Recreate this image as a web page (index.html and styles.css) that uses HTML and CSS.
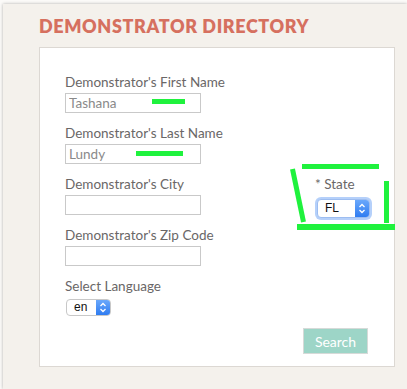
FILE: index.html
```html
<!DOCTYPE html>
<html lang="en">
<head>
  <meta charset="UTF-8">
  <title>Demonstrator Directory</title>
  <link rel="stylesheet" href="styles.css">
</head>
<body>
  <div class="panel">
    <h1>DEMONSTRATOR DIRECTORY</h1>
    <form class="search-box" onsubmit="return false">
      <div class="cols">
        <div class="col-left">
          <div class="field">
            <label>Demonstrator's First Name</label>
            <input type="text" value="Tashana">
          </div>
          <div class="field">
            <label>Demonstrator's Last Name</label>
            <input type="text" value="Lundy">
          </div>
          <div class="field">
            <label>Demonstrator's City</label>
            <input type="text">
          </div>
          <div class="field">
            <label>Demonstrator's Zip Code</label>
            <input type="text">
          </div>
          <div class="field">
            <label>Select Language</label>
            <span class="mac-select lang"><span class="val">en</span><span class="arrows"><svg width="8" height="11" viewBox="0 0 8 11"><path d="M1.5 4 L4 1.5 L6.5 4 M1.5 7 L4 9.5 L6.5 7" fill="none" stroke="#fff" stroke-width="1.3"/></svg></span></span>
          </div>
        </div>
        <div class="col-right">
          <div class="field">
            <label>* State</label>
            <span class="mac-select state focus"><span class="val">FL</span><span class="arrows"><svg width="8" height="11" viewBox="0 0 8 11"><path d="M1.5 4 L4 1.5 L6.5 4 M1.5 7 L4 9.5 L6.5 7" fill="none" stroke="#fff" stroke-width="1.3"/></svg></span></span>
          </div>
        </div>
      </div>
      <div class="actions">
        <button class="search-btn">Search</button>
      </div>
    </form>
  </div>
  <!-- hand-drawn markup on the screenshot -->
  <svg class="marks" width="407" height="389" viewBox="0 0 407 389">
    <g stroke="#1ff23d" stroke-width="5" fill="none">
      <line x1="152" y1="101.5" x2="185" y2="101.5"/>
      <line x1="136" y1="153.5" x2="183" y2="153.5"/>
      <line x1="302" y1="166.5" x2="379" y2="166.5"/>
      <line x1="292.5" y1="169" x2="303.5" y2="222"/>
      <line x1="386.5" y1="181" x2="386.5" y2="223"/>
      <line x1="297" y1="227" x2="395" y2="227" stroke-width="6"/>
    </g>
  </svg>
</body>
</html>
```

FILE: styles.css
```css
body { margin: 0; background: #fbfaf8; font-family: 'Lato', 'Liberation Sans', sans-serif; overflow: hidden; height: 389px; }
.panel { margin: 4px 0 0 3px; height: 385px; box-sizing: border-box; background: #f4f1ec; box-shadow: 0 0 3px rgba(0,0,0,0.3); padding: 11px 0 0 36px; }
h1 { margin: 0 0 10px; font-size: 18px; line-height: 22px; font-weight: 800; color: #d6705f; letter-spacing: 0.6px; }
.search-box { width: 354px; background: #fff; border: 1px solid #dcd8d3; padding: 26px 0 12px; }
.cols { display: flex; padding-left: 25px; }
.col-left { width: 250px; }
.col-right { padding-top: 102px; }
.field { margin-bottom: 12px; }
.field label { display: block; font-size: 13.5px; line-height: 16px; color: #6a6767; margin-bottom: 3px; }
.field input { display: block; box-sizing: border-box; width: 136px; height: 20px; margin: 0; border: 1px solid #c9c9c9; padding: 0 3px; font-family: inherit; font-size: 13.5px; color: #8a8a8a; outline: none; }
.mac-select { display: inline-flex; box-sizing: border-box; height: 17px; border: 1px solid #c8c8c8; border-radius: 4px; background: #fff; overflow: hidden; font-family: 'Liberation Sans', sans-serif; font-size: 12px; color: #111; vertical-align: top; }
.mac-select .val { padding-left: 7px; line-height: 15px; flex: 1; }
.mac-select .arrows { width: 14px; background: linear-gradient(#6aa8fb, #2f7cf1); display: flex; align-items: center; justify-content: center; }
.mac-select.lang { width: 45px; margin: 2px 0 0 1px; }
.mac-select.state { width: 53px; height: 19px; margin: 4px 0 0 2px; }
.mac-select.state .val { line-height: 17px; }
.mac-select.focus { box-shadow: 0 0 0 2px rgba(120,170,245,0.55); border-color: #9dbdf0; }
.actions { display: flex; justify-content: flex-end; padding-right: 26px; }
.search-btn { width: 65px; height: 26px; background: #9dd5c7; border: 1px solid #d6dad8; color: #fff; font-family: inherit; font-size: 14px; padding: 0; cursor: pointer; }
.marks { position: absolute; left: 0; top: 0; pointer-events: none; }
```
